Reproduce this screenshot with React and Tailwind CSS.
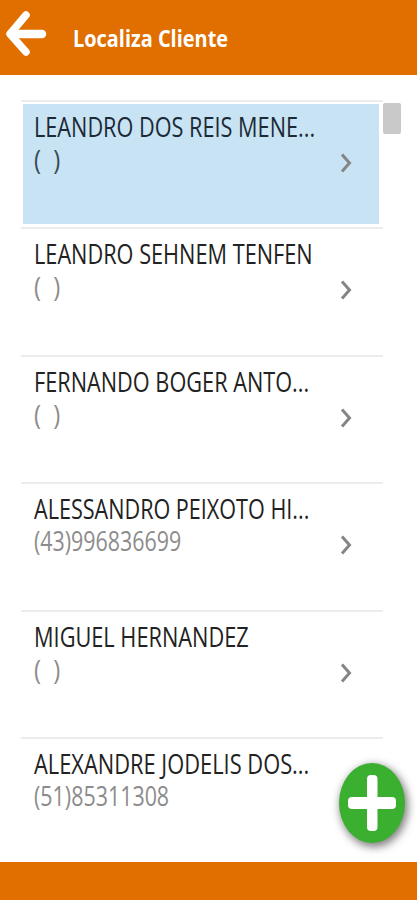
import { useLayoutEffect, useRef } from "react";

const clients = [
  { name: "LEANDRO DOS REIS MENE...", nameWidth: 281, phone: "(  )", phoneWidth: 26, selected: true },
  { name: "LEANDRO SEHNEM TENFEN", nameWidth: 279, phone: "(  )", phoneWidth: 26 },
  { name: "FERNANDO BOGER ANTO...", nameWidth: 275, phone: "(  )", phoneWidth: 26 },
  { name: "ALESSANDRO PEIXOTO HI...", nameWidth: 275, phone: "(43)996836699", phoneWidth: 147 },
  { name: "MIGUEL HERNANDEZ", nameWidth: 215, phone: "(  )", phoneWidth: 26 },
  { name: "ALEXANDRE JODELIS DOS...", nameWidth: 275, phone: "(51)85311308", phoneWidth: 135 },
];

// Condenses a single line of text to the given width.
function FitText({ width, className, children }) {
  const ref = useRef(null);
  useLayoutEffect(() => {
    const el = ref.current;
    el.style.transform = `scaleX(${width / el.offsetWidth})`;
  }, [width]);
  return (
    <div className={className} style={{ width }}>
      <span ref={ref} className="block w-max origin-left whitespace-pre">
        {children}
      </span>
    </div>
  );
}

function ClientRow({ client }) {
  const emptyPhone = client.phone === "(  )";
  return (
    <li className="h-[127.4px] border-t-2 border-[#ececec] pt-[2px] pl-[2px] pr-1">
      <div className={`flex h-[120px] items-start justify-between pl-[10.5px] pr-[27px] ${client.selected ? "bg-[#c8e3f3]" : ""}`}>
        <div className="pt-2">
          <FitText width={client.nameWidth} className={`text-[27px] leading-[30px] font-normal ${client.selected ? "text-[#1b2a35]" : "text-[#222]"}`}>
            {client.name}
          </FitText>
          <FitText width={client.phoneWidth} className={`text-[26.5px] leading-[30px] font-normal ${emptyPhone ? "mt-[3px]" : "mt-[2px]"} ${client.selected ? "text-[#3a4a55]" : "text-[#8c8c8c]"}`}>
            {client.phone}
          </FitText>
        </div>
        <svg className="mt-[49px] h-5 w-3" viewBox="0 0 12 20" fill="none" stroke="#858585" strokeWidth="3">
          <path d="M2 1.5 9.5 10 2 18.5" />
        </svg>
      </div>
    </li>
  );
}

export default function App() {
  return (
    <div className="relative flex h-[900px] w-[417px] flex-col overflow-hidden bg-white font-['Open_Sans','Noto_Sans',sans-serif]">
      <header className="flex h-[75px] shrink-0 items-start bg-[#e06f00]">
        <svg className="mt-[11px] ml-[5px] h-[46px] w-[42px]" viewBox="0 0 42 46" fill="none" stroke="white" strokeLinecap="round" strokeLinejoin="round">
          <path d="M21 4 5 23 21 41" strokeWidth="7.5" />
          <path d="M6 23H37" strokeWidth="8.5" />
        </svg>
        <FitText width={155} className="mt-[22px] ml-[26px] text-[23px] leading-[32px] font-bold text-white">
          Localiza Cliente
        </FitText>
      </header>
      <main className="flex min-h-0 flex-1 items-start overflow-hidden pt-[25px] pl-[21px]">
        <ul className="w-[362px]">
          {clients.map((client) => (
            <ClientRow key={client.name} client={client} />
          ))}
        </ul>
        <div className="mt-[3px] h-[31px] w-[18px] rounded-[2px] bg-[#c9c9c9]" />
      </main>
      <footer className="h-[38px] shrink-0 bg-[#e06f00]" />
      <button className="absolute top-[763px] left-[339px] flex h-20 w-[66px] items-center justify-center rounded-[50%] bg-[#3aaf30] shadow-[2px_3px_9px_1px_rgba(0,0,0,0.5)]">
        <svg className="h-[58px] w-12" viewBox="0 0 48 58" fill="white">
          <rect x="19" y="1" width="10.5" height="56" rx="4" />
          <rect x="0" y="23" width="48" height="12" rx="4" />
        </svg>
      </button>
    </div>
  );
}
